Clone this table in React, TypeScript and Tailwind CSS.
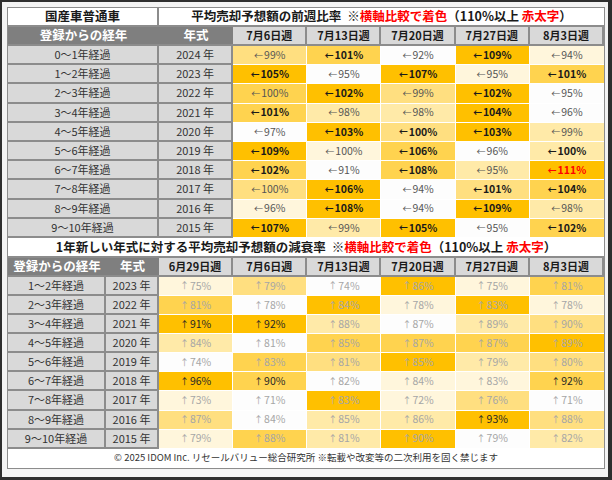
import React from "react";

type Cell = [string, number, number];

const fills = [
  "bg-[#fdfdfd]",
  "bg-[#fff6dc]",
  "bg-[#ffeaa8]",
  "bg-[#ffdf80]",
  "bg-[#ffd34f]",
  "bg-[#ffc000]",
];

const weekly: { age: string; year: string; cells: Cell[] }[] = [
  { age: "0～1年経過", year: "2024", cells: [["99", 3, 0], ["101", 4, 1], ["92", 0, 0], ["109", 5, 1], ["94", 1, 0]] },
  { age: "1～2年経過", year: "2023", cells: [["105", 5, 1], ["95", 0, 0], ["107", 5, 1], ["95", 1, 0], ["101", 4, 1]] },
  { age: "2～3年経過", year: "2022", cells: [["100", 4, 0], ["102", 5, 1], ["99", 3, 0], ["102", 5, 1], ["95", 0, 0]] },
  { age: "3～4年経過", year: "2021", cells: [["101", 4, 1], ["98", 2, 0], ["98", 2, 0], ["104", 5, 1], ["96", 0, 0]] },
  { age: "4～5年経過", year: "2020", cells: [["97", 0, 0], ["103", 5, 1], ["100", 3, 1], ["103", 5, 1], ["99", 2, 0]] },
  { age: "5～6年経過", year: "2019", cells: [["109", 5, 1], ["100", 1, 0], ["106", 4, 1], ["96", 0, 0], ["100", 2, 1]] },
  { age: "6～7年経過", year: "2018", cells: [["102", 4, 1], ["91", 0, 0], ["108", 4, 1], ["95", 2, 0], ["111", 5, 2]] },
  { age: "7～8年経過", year: "2017", cells: [["100", 3, 0], ["106", 5, 1], ["94", 0, 0], ["101", 3, 1], ["104", 4, 1]] },
  { age: "8～9年経過", year: "2016", cells: [["96", 1, 0], ["108", 5, 1], ["94", 0, 0], ["109", 5, 1], ["98", 2, 0]] },
  { age: "9～10年経過", year: "2015", cells: [["107", 5, 1], ["99", 2, 0], ["105", 5, 1], ["95", 0, 0], ["102", 4, 1]] },
];

const decay: { age: string; year: string; cells: Cell[] }[] = [
  { age: "1～2年経過", year: "2023", cells: [["75", 1, 0], ["79", 3, 0], ["74", 0, 0], ["86", 5, 0], ["75", 1, 0], ["81", 4, 0]] },
  { age: "2～3年経過", year: "2022", cells: [["81", 4, 0], ["78", 0, 0], ["84", 5, 0], ["78", 1, 0], ["83", 5, 0], ["78", 1, 0]] },
  { age: "3～4年経過", year: "2021", cells: [["91", 5, 1], ["92", 5, 1], ["88", 2, 0], ["87", 0, 0], ["89", 2, 0], ["90", 3, 0]] },
  { age: "4～5年経過", year: "2020", cells: [["84", 2, 0], ["81", 0, 0], ["85", 4, 0], ["87", 4, 0], ["87", 4, 0], ["89", 5, 0]] },
  { age: "5～6年経過", year: "2019", cells: [["74", 0, 0], ["83", 4, 0], ["81", 3, 0], ["85", 5, 0], ["79", 2, 0], ["80", 3, 0]] },
  { age: "6～7年経過", year: "2018", cells: [["96", 5, 1], ["90", 4, 1], ["82", 0, 0], ["84", 1, 0], ["83", 1, 0], ["92", 4, 1]] },
  { age: "7～8年経過", year: "2017", cells: [["73", 1, 0], ["71", 0, 0], ["83", 5, 0], ["72", 1, 0], ["76", 3, 0], ["71", 0, 0]] },
  { age: "8～9年経過", year: "2016", cells: [["87", 3, 0], ["84", 0, 0], ["85", 2, 0], ["86", 2, 0], ["93", 5, 1], ["88", 3, 0]] },
  { age: "9～10年経過", year: "2015", cells: [["79", 1, 0], ["88", 4, 0], ["81", 2, 0], ["90", 5, 0], ["79", 0, 0], ["82", 2, 0]] },
];

const grid = "grid grid-cols-[98px_53px_repeat(6,1fr)]";
const grayCell =
  "flex items-center justify-center bg-[#d9d9d9] border-r-2 border-b-2 border-[#8c8c8c] text-[11px] text-[#333]";
const dateCell =
  "flex items-center justify-center bg-[#d9d9d9] border-r-2 border-b-2 border-[#8c8c8c] text-[11px] font-bold text-[#1a1a1a]";

// title text kept in one inline span so the spaces survive flex layout
const Title = ({ lead }: { lead: string }) => (
  <span>
    {lead}
    <span className="ml-[6px]">※</span>
    <span className="text-[#ff0000]">横軸比較で着色</span>
    （110%以上 <span className="text-[#ff0000]">赤太字</span>）
  </span>
);

function WeeklyCell({ c, last }: { c: Cell; last: boolean }) {
  const [v, lv, w] = c;
  const text =
    w === 2 ? "font-bold text-[#ff0000]" : w === 1 ? "font-bold text-[#1a1a1a]" : "text-[#555]";
  return (
    <div
      className={`flex items-center justify-center border-b border-white ${last ? "" : "border-r"} ${fills[lv]} text-[10.5px] ${text}`}
    >
      <span className="text-[9px] mr-[1px]">←</span>
      {v}%
    </div>
  );
}

function DecayCell({ c, last }: { c: Cell; last: boolean }) {
  const [v, lv, w] = c;
  const text = w === 1 ? "text-[#262626]" : "text-[#a6a6a6]";
  return (
    <div
      className={`flex items-center justify-center border-b border-white ${last ? "" : "border-r"} ${fills[lv]} text-[10.5px] ${text}`}
    >
      <span className="text-[9px] mr-[1px]">↑</span>
      {v}%
    </div>
  );
}

export default function App() {
  return (
    <div
      className="w-[612px] h-[480px] bg-[#2e2e2e] pl-[2px] pt-[2px] pr-[4px] pb-[3px]"
      style={{ fontFamily: '"Noto Sans CJK JP", "Noto Sans", sans-serif' }}
    >
      <div className="w-full h-full bg-[#f3f3f3] pl-[5px] pt-[5px]">
        <div className="w-[598px] border border-[#8c8c8c] bg-white leading-none">
          {/* weekly ratio */}
          <div className={`${grid} h-[19px]`}>
            <div className="col-span-2 flex items-center justify-center border-r-2 border-b-2 border-[#8c8c8c] text-[12.5px] font-bold text-[#1a1a1a]">
              国産車普通車
            </div>
            <div className="col-span-6 flex items-center justify-center border-b-2 border-[#8c8c8c] text-[12.5px] font-bold text-[#1a1a1a]">
              <Title lead="平均売却予想額の前週比率" />
            </div>
          </div>
          <div className={`${grid} h-[19px]`}>
            <div className="col-span-3 grid grid-cols-[151px_1fr] bg-[#7f7f7f] border-b-2 border-[#8c8c8c] text-[12.5px] font-bold text-white">
              <div className="flex items-center justify-center">登録からの経年</div>
              <div className="flex items-center justify-center">年式</div>
            </div>
            {["7月6日週", "7月13日週", "7月20日週", "7月27日週", "8月3日週"].map((d, i) => (
              <div key={d} className={`${dateCell} ${i === 4 ? "border-r-0" : ""}`}>
                {d}
              </div>
            ))}
          </div>
          {weekly.map((r) => (
            <div key={r.year} className={`${grid} h-[19.2px]`}>
              <div className={`${grayCell} col-span-2`}>{r.age}</div>
              <div className={grayCell}>{r.year} 年</div>
              {r.cells.map((c, i) => (
                <WeeklyCell key={i} c={c} last={i === 4} />
              ))}
            </div>
          ))}

          {/* decay ratio */}
          <div className="h-[20px] flex items-center justify-center border-b-2 border-[#8c8c8c] text-[12.5px] font-bold text-[#1a1a1a]">
            <Title lead="1年新しい年式に対する平均売却予想額の減衰率" />
          </div>
          <div className={`${grid} h-[19px]`}>
            <div className="flex items-center justify-center bg-[#7f7f7f] border-b-2 border-[#8c8c8c] text-[12.5px] font-bold text-white">
              登録からの経年
            </div>
            <div className="flex items-center justify-center bg-[#7f7f7f] border-b-2 border-[#8c8c8c] text-[12.5px] font-bold text-white">
              年式
            </div>
            {["6月29日週", "7月6日週", "7月13日週", "7月20日週", "7月27日週", "8月3日週"].map((d, i) => (
              <div key={d} className={`${dateCell} ${i === 5 ? "border-r-0" : ""}`}>
                {d}
              </div>
            ))}
          </div>
          {decay.map((r) => (
            <div key={r.year} className={`${grid} h-[19.1px]`}>
              <div className={grayCell}>{r.age}</div>
              <div className={grayCell}>{r.year} 年</div>
              {r.cells.map((c, i) => (
                <DecayCell key={i} c={c} last={i === 5} />
              ))}
            </div>
          ))}

          <div className="h-[19px] flex items-center justify-center text-[9.5px] text-[#333]">
            © 2025 IDOM Inc. リセールバリュー総合研究所 ※転載や改変等の二次利用を固く禁じます
          </div>
        </div>
      </div>
    </div>
  );
}
